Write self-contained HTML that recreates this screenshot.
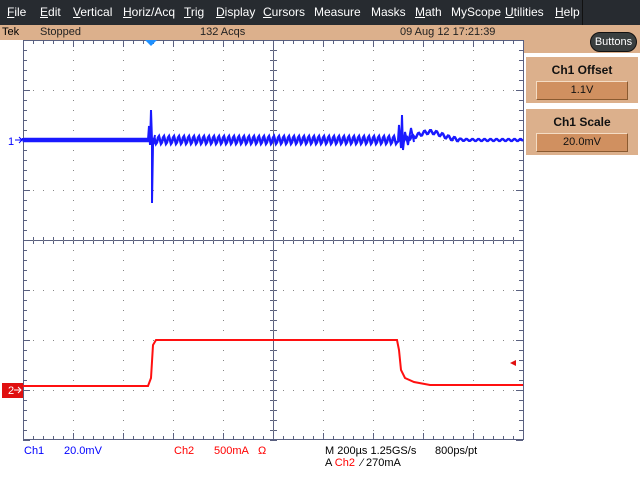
<!DOCTYPE html>
<html><head><meta charset="utf-8"><style>
body{margin:0;width:640px;height:480px;overflow:hidden;background:#fff;font-family:"Liberation Sans",sans-serif;position:relative}
.menu{position:absolute;left:0;top:0;width:640px;height:25px;background:#272b30;color:#fff;font-size:12px}
.menu span{position:absolute;top:5px}
.status{position:absolute;left:0;top:25px;width:640px;height:15px;background:#dcb08c;font-size:11px;color:#222}
.status span{position:absolute;top:1px}
.hdr{position:absolute;left:523px;top:40px;width:117px;height:13px;background:#dcb08c}
.box{position:absolute;left:526px;width:112px;height:46px;background:#dcb08c}
.box b{position:absolute;left:0;width:112px;text-align:center;top:6px;font-size:12px;color:#111}
.box i{position:absolute;left:10px;top:24px;width:90px;height:17px;background:#d09060;border:1px solid #f4dcc4;border-right-color:#8a5a30;border-bottom-color:#8a5a30;font-style:normal;font-size:11px;text-align:center;line-height:17px;color:#111}
.bt{position:absolute;left:590px;top:32px;width:45px;height:18px;border-radius:10px;background:#3a3f3f;color:#fff;font-size:11px;text-align:center;line-height:18px;border:1px solid #111}
.bot{position:absolute;font-size:11px}
</style></head><body>
<div class="menu">
<span style="left:7px"><u>F</u>ile</span><span style="left:40px"><u>E</u>dit</span><span style="left:73px"><u>V</u>ertical</span><span style="left:123px"><u>H</u>oriz/Acq</span><span style="left:184px"><u>T</u>rig</span><span style="left:216px"><u>D</u>isplay</span><span style="left:263px"><u>C</u>ursors</span><span style="left:314px">Measure</span><span style="left:371px">Masks</span><span style="left:415px"><u>M</u>ath</span><span style="left:451px">MyScope</span><span style="left:505px"><u>U</u>tilities</span><span style="left:555px"><u>H</u>elp</span>
<div style="position:absolute;left:582px;top:0;width:1px;height:25px;background:#111"></div>
</div>
<div class="status"><span style="left:2px;color:#000">Tek</span><span style="left:40px">Stopped</span><span style="left:200px">132 Acqs</span><span style="left:400px">09 Aug 12 17:21:39</span></div>
<div class="hdr"></div>
<div class="box" style="top:57px"><b>Ch1 Offset</b><i>1.1V</i></div>
<div class="box" style="top:109px"><b>Ch1 Scale</b><i>20.0mV</i></div>
<div class="bt">Buttons</div>
<svg id="g" width="640" height="480" style="position:absolute;left:0;top:0" xmlns="http://www.w3.org/2000/svg"></svg>
<div class="bot" style="left:24px;top:445px;color:#0000ff">Ch1</div>
<div class="bot" style="left:64px;top:445px;color:#0000ff">20.0mV</div>
<div class="bot" style="left:174px;top:445px;color:#f00">Ch2</div>
<div class="bot" style="left:214px;top:445px;color:#f00">500mA</div>
<div class="bot" style="left:258px;top:445px;color:#f00">Ω</div>
<div class="bot" style="left:325px;top:445px">M 200µs 1.25GS/s</div>
<div class="bot" style="left:435px;top:445px">800ps/pt</div>
<div class="bot" style="left:325px;top:457px">A <span style="color:#f00">Ch2</span> &nbsp;⁄ 270mA</div>
<script>
var s='',L=23,R=523,T=40,B=440,c='#5a6080';
s+='<rect x="23.5" y="40.5" width="500" height="399" fill="none" stroke="'+c+'"/>';
s+='<line x1="273.5" y1="40" x2="273.5" y2="440" stroke="'+c+'"/><line x1="23" y1="240.5" x2="523" y2="240.5" stroke="'+c+'"/>';
for(var x=L;x<=R;x+=10){var big=((x-L)%50==0);s+='<line x1="'+(x+.5)+'" y1="40" x2="'+(x+.5)+'" y2="'+(big?47:44)+'" stroke="'+c+'"/><line x1="'+(x+.5)+'" y1="'+(big?433:436)+'" x2="'+(x+.5)+'" y2="440" stroke="'+c+'"/><line x1="'+(x+.5)+'" y1="237" x2="'+(x+.5)+'" y2="244" stroke="'+c+'"/>';}
for(var y=T;y<=B;y+=10){var big=((y-T)%50==0);s+='<line x1="23" y1="'+(y+.5)+'" x2="'+(big?30:27)+'" y2="'+(y+.5)+'" stroke="'+c+'"/><line x1="'+(big?516:519)+'" y1="'+(y+.5)+'" x2="523" y2="'+(y+.5)+'" stroke="'+c+'"/><line x1="270" y1="'+(y+.5)+'" x2="277" y2="'+(y+.5)+'" stroke="'+c+'"/>';}
for(var gx=73;gx<523;gx+=50)for(var y=T+10;y<B;y+=10)s+='<rect x="'+gx+'" y="'+y+'" width="1" height="1" fill="#888"/>';
for(var gy=90;gy<440;gy+=50)for(var x=L+10;x<R;x+=10)s+='<rect x="'+x+'" y="'+gy+'" width="1" height="1" fill="#888"/>';
var p='M23 140';for(var x=23;x<=523;x+=1){var y=140;if(x>=155&&x<398)y=140+4*Math.sin(x*2*Math.PI/5);else if(x>=398){var d=x-430;y=140-8*Math.exp(-d*d/300)+2*Math.sin(x*2*Math.PI/6)*(x<460?1:0.5);}else y=140+((x%2)?-2:2);p+=' L'+x+' '+y.toFixed(1);}
s+='<path d="'+p+'" fill="none" stroke="#1a1aff" stroke-width="2.5"/>';
s+='<path d="M148 140 L149 126 L150 145 L151 110 L152 140 L152 203 L153 145 L155 135 M398 140 L399 125 L401 148 L402 115 L403 150 L405 132 L408 145 L411 128 L414 142" fill="none" stroke="#1a1aff" stroke-width="2"/>';
s+='<path d="M23 386 L148 386 L151 378 L153 345 L156 340 L397 340 L399 350 L401 370 L405 378 L414 382 L430 385 L523 385" fill="none" stroke="#ff1010" stroke-width="2"/>';
s+='<text x="8" y="145" fill="#0000ff" font-size="11" font-family="Liberation Sans">1</text><path d="M15 140 L22 140 M19 137 L22 140 L19 143" stroke="#0000ff" fill="none"/>';
s+='<rect x="2" y="383" width="21" height="15" fill="#e01010"/><text x="8" y="394" fill="#fff" font-size="11" font-family="Liberation Sans">2</text><path d="M14 390 L21 390 M18 387 L21 390 L18 393" stroke="#fff" fill="none"/>';
s+='<path d="M510 363 L516 360 L516 366 Z" fill="#e01010"/>';
s+='<path d="M145 40 L157 40 L151 46 Z" fill="#1e90ff"/>';
document.getElementById('g').innerHTML=s;
</script>
</body></html>
